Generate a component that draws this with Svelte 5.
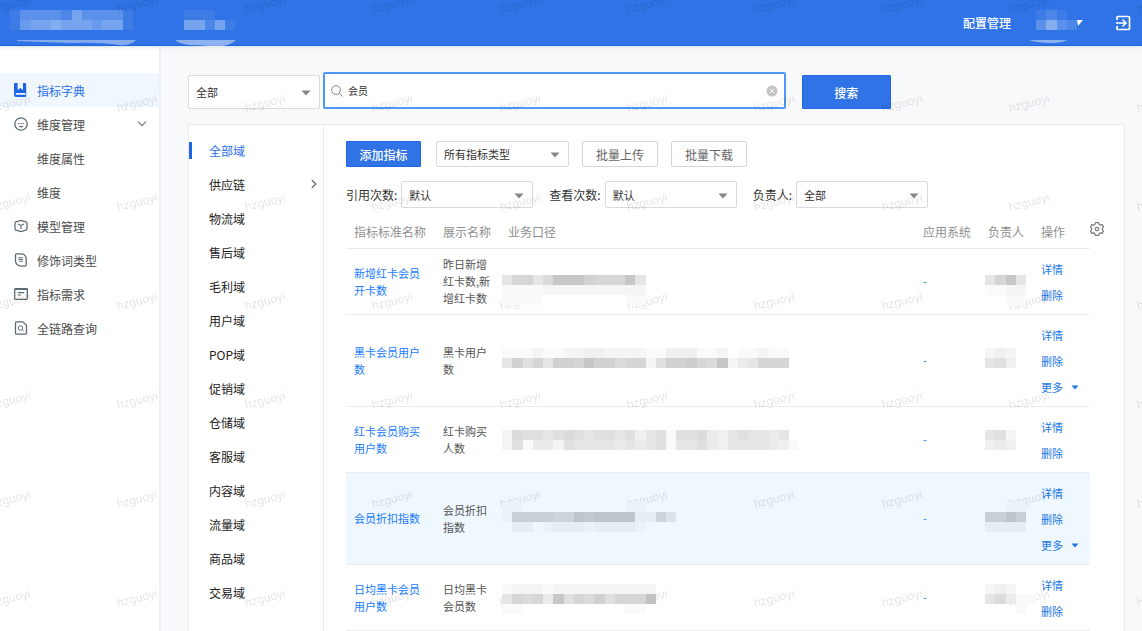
<script>
    let keyword = $state("会员");
    let activeDomain = $state("全部域");
    let winWidth = $state(0);
    let winHeight = $state(0);

    const menu = [
        { name: "指标字典", icon: "book", active: true },
        { name: "维度管理", icon: "dots", open: true },
        { name: "维度属性" },
        { name: "维度" },
        { name: "模型管理", icon: "box" },
        { name: "修饰词类型", icon: "leaf" },
        { name: "指标需求", icon: "card" },
        { name: "全链路查询", icon: "search" },
    ];

    const domains = [
        "全部域", "供应链", "物流域", "售后域", "毛利域", "用户域", "POP域",
        "促销域", "仓储域", "客服域", "内容域", "流量域", "商品域", "交易域",
    ];

    // masked values: one string per line of blocks, one hex digit of shade per block
    const rows = [
        {
            name: "新增红卡会员开卡数",
            display: "昨日新增红卡数,新增红卡数",
            top: 23,
            caliber: ["58857bbb9888b5", "11112222222222", "11110000000011"],
            owner: ["58b5", "1122", "0011"],
        },
        {
            name: "黑卡会员用户数",
            display: "黑卡用户数",
            top: 17,
            caliber: ["1112112233222211333112011211", "59685998b997882699a87b245888"],
            owner: ["232", "563"],
            more: true,
        },
        {
            name: "红卡会员购买用户数",
            display: "红卡购买人数",
            top: 20,
            caliber: ["27665676566563561667435655450", "26144265555454561556435555431"],
            owner: ["562", "343"],
        },
        {
            name: "会员折扣指数",
            display: "会员折扣指数",
            top: 13,
            caliber: ["11000000000011000", "1888877a9aaaa2274", "02201222122221000"],
            owner: ["0011", "88a8", "2222"],
            more: true,
            hover: true,
        },
        {
            name: "日均黑卡会员用户数",
            display: "日均黑卡会员数",
            top: 16,
            caliber: ["122212222222222", "58784b68796888c", "110000000000110"],
            owner: ["23200", "57411", "00010"],
        },
    ];

    let marks = $derived.by(() => {
        let list = [];
        for (let y = 13; y < winHeight; y += 99) {
            for (let c = 0; c * 127 - 9 < winWidth; c++) {
                list.push({ x: Math.round(c * 127.4) - 9, y });
            }
        }
        return list;
    });

    function blocks(lines, left, top) {
        let list = [];
        lines.forEach((line, r) => {
            [...line].forEach((digit, c) => {
                if (digit === "0") return;
                const x = Math.round(c * 10.25);
                const w = Math.round((c + 1) * 10.25) - x;
                list.push({ x: x + left, y: top + r * 10, w, shade: parseInt(digit, 16) });
            });
        });
        return list;
    }
</script>

<svelte:window bind:innerWidth={winWidth} bind:innerHeight={winHeight} />

{#snippet mosaic(lines, top)}
    <svg class="mosaic" width={Math.round(lines[0].length * 10.25)} height="60" aria-hidden="true">
        {#each blocks(lines, 0, top) as b}
            <rect class="under" x={b.x} y={b.y} width={b.w} height="10" />
            <rect x={b.x} y={b.y} width={b.w} height="10" fill-opacity={b.shade * 0.02} />
        {/each}
    </svg>
{/snippet}

{#snippet whiteBlocks(lines, left)}
    {#each blocks(lines, left, 10) as b}
        <rect x={b.x} y={b.y} width={b.w} height="10" fill="#fff" fill-opacity={b.shade * 0.07} />
    {/each}
{/snippet}

{#snippet caret()}
    <svg class="caret" width="10" height="6" viewBox="0 0 10 6"><path d="M.5 .5h9L5 5.5z" fill="#85878b" /></svg>
{/snippet}

{#snippet icon(kind)}
    <svg class="icon" width="14" height="14" viewBox="0 0 14 14" fill="none" stroke="#5d6b73" stroke-width="1.3">
        {#if kind === "book"}
            <path d="M1.300 0H3.600V7L6.300 5 9 7V0h2q1.200 0 1.200 1.200v11.600q0 1.200-1.200 1.200H1.800Q0 14 0 12.200V1.300Q0 0 1.300 0zM2.500 10q-.9 0-.9.900t.9.900h9V10z" fill="#1f63e6" stroke="none" fill-rule="evenodd" />
        {:else if kind === "dots"}
            <circle cx="7" cy="7" r="6.200" />
            <path d="M3.800 6.500h1.400M6.300 6.500h1.400M8.800 6.500h1.400M5 9.300q2 1 4 0" stroke-width="1.200" />
        {:else if kind === "box"}
            <path d="M7 1.400l5 1.500q1 .3 1 1.300v5.600q0 1-1 1.300L7 12.600l-5-1.500q-1-.3-1-1.300V4.200q0-1 1-1.300z" />
            <path d="M4 5l3 1.500L10 5M7 6.500V10" stroke-width="1.100" />
        {:else if kind === "leaf"}
            <path d="M2.500 .8h5.500q4.200 1 4.200 5v6q0 1.400-1.400 1.400H7q-5.500-1-5.500-5.500V1.800q0-1 1-1z" />
            <path d="M4.300 4.700h4.500M4.300 6.500h4.500M5.300 8.300h3.500" stroke-width="1" />
        {:else if kind === "card"}
            <rect x=".7" y="1.700" width="12.600" height="10.600" rx=".8" />
            <path d="M.7 2.300h12.600M3.800 5.700h6.400M3.800 8h3.400" stroke-width="1.200" />
        {:else}
            <path d="M2.500 .8h6.300l3.700 3.400v8q0 1-1 1h-9q-1 0-1-1V1.800q0-1 1-1z" />
            <circle cx="6.500" cy="7" r="2.200" stroke-width="1" />
            <path d="M8.300 8.800l1.700 1.700" stroke-width="1" />
        {/if}
    </svg>
{/snippet}

<div class="page">
    <header class="topbar">
        <svg class="brand" width="126" height="48" aria-hidden="true">
            {@render whiteBlocks(["133332533331", "145565554551"], 0)}
            <path d="M7 40H126Q121 46 109 45Q90 42 62 43Q30 42 7 41z" fill="#fff" fill-opacity=".4" />
        </svg>
        <svg class="brand" width="61" height="48" aria-hidden="true">
            {@render whiteBlocks(["11100", "55251"], 9)}
            <path d="M0 40H61Q54 47 39 47Q28 45 14 45Q5 44 0 40z" fill="#fff" fill-opacity=".45" />
        </svg>
        <a class="config" href="#config">配置管理</a>
        <button class="user" aria-label="账户">
            <svg width="54" height="48">
                {@render whiteBlocks(["1210", "3632"], 7)}
                <path d="M0 40H38Q34 43 22 43Q8 43 0 40z" fill="#fff" fill-opacity=".45" />
                <path d="M48 20h6l-5 6z" fill="#fff" />
            </svg>
        </button>
        <button class="logout" aria-label="退出">
            <svg width="16" height="16" viewBox="0 0 16 16" fill="none" stroke="#fff" stroke-width="1.700">
                <path d="M2 5V2.500q0-1 1-1h10.500q1 0 1 1v11q0 1-1 1H3q-1 0-1-1V11M1 8h9.500M7.500 4.500L11 8l-3.500 3.500" />
            </svg>
        </button>
    </header>

    <div class="body">
        <nav class="sidebar">
            {#each menu as item}
                <a class="menu-item" class:active={item.active} class:sub={!item.icon} href="#menu">
                    {#if item.icon}
                        {@render icon(item.icon)}
                    {/if}
                    <span>{item.name}</span>
                    {#if item.open}
                        <svg class="fold" width="10" height="6" viewBox="0 0 10 6"><path d="M1 .7l4 4 4-4" fill="none" stroke="#777" stroke-width="1.200" /></svg>
                    {/if}
                </a>
            {/each}
        </nav>

        <main>
            <form class="search" onsubmit={(e) => e.preventDefault()}>
                <div class="select tall">
                    <select aria-label="搜索范围"><option>全部</option></select>
                    {@render caret()}
                </div>
                <div class="keyword">
                    <svg width="12" height="12" viewBox="0 0 12 12" fill="none" stroke="#888" stroke-width="1"><circle cx="5" cy="5" r="4.400" /><path d="M8.200 8.200l3.300 3.300" /></svg>
                    <input type="text" aria-label="关键字" bind:value={keyword} />
                    <button class="clear" type="button" aria-label="清空" onclick={() => (keyword = "")}>
                        <svg width="12" height="12" viewBox="0 0 12 12"><circle cx="6" cy="6" r="5.500" fill="#c4c4c4" /><path d="M4 4l4 4M8 4L4 8" stroke="#fff" /></svg>
                    </button>
                </div>
                <button class="primary submit">搜索</button>
            </form>

            <div class="panel">
                <ul class="domains">
                    {#each domains as domain}
                        <li>
                            <button class="domain" class:current={domain === activeDomain} onclick={() => (activeDomain = domain)}>
                                {domain}
                                {#if domain === "供应链"}
                                    <svg width="6" height="10" viewBox="0 0 6 10"><path d="M.8 1l4 4-4 4" fill="none" stroke="#666" stroke-width="1.200" /></svg>
                                {/if}
                            </button>
                        </li>
                    {/each}
                </ul>

                <section class="content">
                    <div class="tools">
                        <button class="primary">添加指标</button>
                        <div class="select">
                            <select aria-label="指标类型"><option>所有指标类型</option></select>
                            {@render caret()}
                        </div>
                        <button class="plain">批量上传</button>
                        <button class="plain">批量下载</button>
                    </div>

                    <div class="filters">
                        <label for="quoted">引用次数:</label>
                        <div class="select">
                            <select id="quoted"><option>默认</option></select>
                            {@render caret()}
                        </div>
                        <label for="viewed">查看次数:</label>
                        <div class="select">
                            <select id="viewed"><option>默认</option></select>
                            {@render caret()}
                        </div>
                        <label for="owner">负责人:</label>
                        <div class="select">
                            <select id="owner"><option>全部</option></select>
                            {@render caret()}
                        </div>
                    </div>

                    <div class="list">
                        <table>
                            <thead>
                                <tr>
                                    <th class="col-name">指标标准名称</th>
                                    <th class="col-display">展示名称</th>
                                    <th>业务口径</th>
                                    <th class="col-system">应用系统</th>
                                    <th class="col-owner">负责人</th>
                                    <th class="col-action">操作</th>
                                </tr>
                            </thead>
                            <tbody>
                                {#each rows as row}
                                    <tr class:hover={row.hover}>
                                        <td><a class="name" href="#detail">{row.name}</a></td>
                                        <td>{row.display}</td>
                                        <td class="masked">{@render mosaic(row.caliber, row.top)}</td>
                                        <td class="system">-</td>
                                        <td class="masked owner">{@render mosaic(row.owner, row.top)}</td>
                                        <td class="actions">
                                            <a href="#detail">详情</a>
                                            <a href="#delete">删除</a>
                                            {#if row.more}
                                                <button class="more">
                                                    更多
                                                    <svg width="8" height="5" viewBox="0 0 8 5"><path d="M.5 .5h7L4 4.500z" fill="#1b78e5" /></svg>
                                                </button>
                                            {/if}
                                        </td>
                                    </tr>
                                {/each}
                            </tbody>
                        </table>
                        <button class="gear" aria-label="列设置">
                            <svg width="14" height="14" viewBox="0 0 14 14" fill="none" stroke="#7b7b7b" stroke-width="1.200" stroke-linejoin="round">
                                <path d="M5.300 .7h3.400l.5 1.800 1.100.6 1.800-.5 1.400 2.500-1.200 1.300v1.200l1.200 1.300-1.400 2.500-1.800-.5-1.100.6-.5 1.800H5.300l-.5-1.800-1.100-.6-1.800.5L.5 8.900l1.200-1.300V6.400L.5 5.100l1.400-2.500 1.800.5 1.100-.6z" />
                                <circle cx="7" cy="7" r="1.700" />
                            </svg>
                        </button>
                    </div>
                </section>
            </div>
        </main>
    </div>

    <svg class="watermark" aria-hidden="true">
        {#each marks as m}
            <text x={m.x} y={m.y} transform="rotate(-14 {m.x} {m.y})">hzguoyi</text>
        {/each}
    </svg>
</div>

<style>
    :global(body) {
        margin: 0;
    }

    .page {
        position: relative;
        display: flex;
        flex-direction: column;
        min-height: 100vh;
        overflow: hidden;
        background: #f8f9fb;
        color: #333;
        font-family: "Noto Sans CJK SC", "Liberation Sans", sans-serif;
        font-size: 12px;
    }

    .page * {
        box-sizing: border-box;
    }

    a {
        color: inherit;
        text-decoration: none;
    }

    button,
    select,
    input {
        margin: 0;
        padding: 0;
        border: none;
        background: none;
        color: inherit;
        font: inherit;
    }

    button {
        cursor: pointer;
    }

    svg {
        display: block;
        flex: none;
    }

    .topbar {
        display: flex;
        align-items: center;
        height: 46px;
        padding: 0 11px 0 10px;
        background: #2f73e6;
        border-bottom: 1px solid #1e64e2;
        box-shadow: 0 1px 3px #cfe0e0;
        color: #fff;
        z-index: 1;
    }

    .brand {
        align-self: flex-start;
        margin-right: 39px;
    }

    .config {
        margin-left: auto;
        margin-right: 18px;
        font-weight: 500;
    }

    .user {
        align-self: flex-start;
        margin-right: 32px;
    }

    .body {
        display: flex;
        flex: 1;
    }

    .sidebar {
        flex: none;
        width: 161px;
        padding-top: 27px;
        background: #fff;
        border-right: 2px solid #eef0f5;
        color: #4c4c4c;
    }

    .menu-item {
        display: flex;
        align-items: center;
        height: 34px;
        padding: 0 12px 0 14px;
        gap: 9px;
    }

    .menu-item.active {
        background: #f0f7ff;
        color: #2a6fe8;
    }

    .menu-item.sub {
        padding-left: 37px;
    }

    .fold {
        margin-left: auto;
    }

    main {
        display: flex;
        flex-direction: column;
        flex: 1;
        min-width: 0;
        padding: 26px 17px 0 27px;
    }

    .search {
        display: flex;
        align-items: flex-end;
        width: 75%;
        height: 37px;
        gap: 3px;
    }

    .select {
        position: relative;
        flex: none;
        width: 133px;
        height: 26px;
    }

    .select select {
        width: 100%;
        height: 100%;
        padding: 0 24px 0 7px;
        border: 1px solid #d9dbde;
        border-radius: 2px;
        background: #fff;
        font-size: 11px;
        appearance: none;
    }

    .select.tall {
        width: 132px;
        height: 34px;
    }

    .caret {
        position: absolute;
        right: 9px;
        top: calc(50% - 2px);
        pointer-events: none;
    }

    .keyword {
        display: flex;
        align-items: center;
        flex: 1;
        height: 37px;
        padding: 0 6px;
        gap: 5px;
        border: 2px solid #4d97f8;
        border-radius: 2px;
        background: #fff;
    }

    .keyword input {
        flex: 1;
        min-width: 0;
        outline: none;
        font-size: 10px;
    }

    .primary {
        width: 75px;
        height: 26px;
        border: 1px solid #2166e3;
        border-radius: 1px;
        background: #2f73e6;
        color: #fff;
        font-weight: 500;
    }

    .submit {
        width: 89px;
        height: 34px;
        margin-left: 13px;
    }

    .panel {
        display: flex;
        flex: 1;
        margin-top: 15px;
        border: 1px solid #e9ebf1;
        border-bottom: none;
        background: #fff;
    }

    .domains {
        flex: none;
        width: 135px;
        margin: 0;
        padding: 8px 0 0;
        border-right: 1px solid #e9ebf1;
        list-style: none;
        color: #222;
    }

    .domain {
        display: flex;
        align-items: center;
        justify-content: space-between;
        width: 100%;
        height: 34px;
        padding: 0 6px 0 20px;
    }

    .domain.current {
        justify-content: flex-start;
        gap: 17px;
        padding-left: 0;
        color: #2a6fe8;
    }

    .domain.current::before {
        content: "";
        width: 3px;
        height: 17px;
        background: #1f63e6;
    }

    .content {
        flex: 1;
        min-width: 0;
        padding: 16px 20px 0 22px;
    }

    .tools {
        display: flex;
        gap: 13px;
    }

    .tools .primary {
        margin-right: 2px;
    }

    .plain {
        width: 76px;
        height: 26px;
        border: 1px solid #d4d6d9;
        border-radius: 2px;
        background: #fff;
        color: #666;
    }

    .filters {
        display: flex;
        align-items: center;
        gap: 4px;
        margin-top: 14px;
    }

    .filters .select {
        width: 132px;
        height: 27px;
        margin-right: 12px;
    }

    .list {
        display: flex;
        align-items: flex-start;
        margin-top: 7px;
    }

    table {
        flex: 1;
        width: 100%;
        min-width: 0;
        table-layout: fixed;
        border-collapse: separate;
        border-spacing: 0;
    }

    th {
        height: 34px;
        padding: 0 0 0 8px;
        border-bottom: 1px solid #ebedf2;
        color: #8f8f8f;
        font-weight: 400;
        text-align: left;
        white-space: nowrap;
    }

    .col-name {
        width: 89px;
    }

    .col-display,
    .col-system {
        width: 65px;
    }

    .col-owner {
        width: 53px;
    }

    .col-action {
        width: 57px;
    }

    td {
        padding: 0 8px;
        border-bottom: 1px solid #ebedf2;
        color: #555;
        font-size: 11px;
        line-height: 17px;
        vertical-align: middle;
    }

    .hover td {
        background: #eff7ff;
    }

    .name,
    .system {
        color: #1a7cff;
    }

    .masked {
        padding: 0 0 0 2px;
    }

    .owner {
        padding-left: 5px;
    }

    .mosaic {
        position: relative;
        z-index: 2;
    }

    .under {
        fill: #fff;
    }

    .hover .under {
        fill: #eff7ff;
    }

    .actions {
        padding: 7px 0 6px 8px;
        color: #1b78e5;
    }

    .actions a {
        display: block;
        line-height: 26px;
    }

    .more {
        display: flex;
        align-items: center;
        height: 26px;
        gap: 8px;
    }

    .gear {
        padding-top: 7px;
    }

    .watermark {
        position: absolute;
        top: 0;
        left: 0;
        width: 100%;
        height: 100%;
        pointer-events: none;
        z-index: 1;
    }

    .watermark text {
        fill: #000;
        fill-opacity: 0.13;
        font-family: "Liberation Sans", sans-serif;
        font-size: 12px;
    }
</style>
